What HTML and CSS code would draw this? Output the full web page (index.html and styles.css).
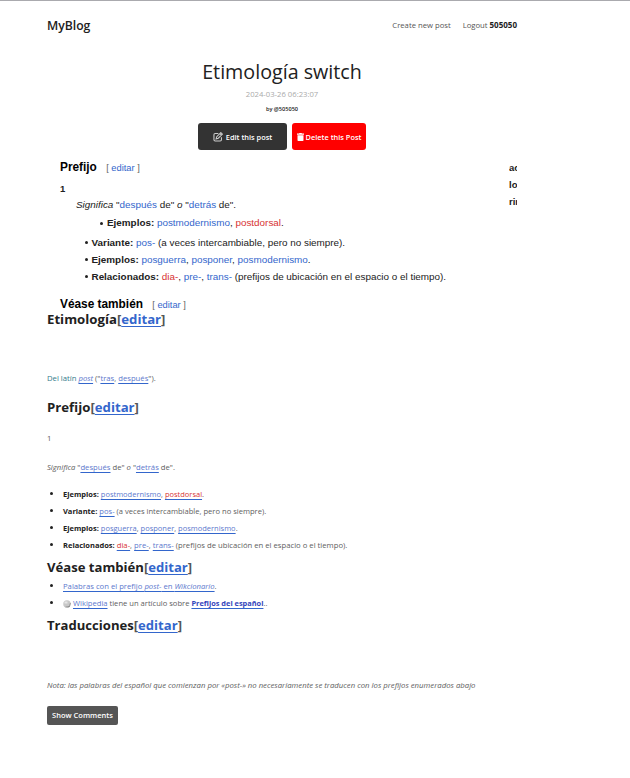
FILE: index.html
```html
<!DOCTYPE html>
<html lang="es">
<head>
<meta charset="utf-8">
<title>MyBlog</title>
<link rel="stylesheet" href="styles.css">
</head>
<body>
<div class="page">
<header class="header"><a class="brand">MyBlog</a><nav class="nav"><a class="create">Create new post</a><a class="logout">Logout <b>505050</b></a></nav></header>
<section class="intro">
<h1>Etimología switch</h1>
<p class="date">2024-03-26 06:23:07</p>
<p class="by">by @505050</p>
<div class="actions">
<a class="btn edit"><svg width="10" height="10" viewBox="0 0 16 16" fill="none" stroke="#ccc" stroke-width="1.7"><path d="M8.5 2.5H3.5Q1.5 2.5 1.5 4.5V12.5Q1.5 14.5 3.5 14.5H11.5Q13.5 14.5 13.5 12.5V8.5M5 11l1-3.500L12.500 1l2.500 2.500L8.500 10zM11 2.500L13.500 5"/></svg><span>Edit this post</span></a>
<a class="btn delete"><svg width="7" height="8" viewBox="0 0 14 16" fill="#fff"><path d="M0 1h4l1-1h4l1 1h4v2.500H0zM1 4.500h12v10q0 1.500-1.500 1.500h-9Q1 16 1 14.500z"/></svg><span>Delete this Post</span></a>
</div>
</section>
<section class="embed">
<div class="wiki">
<h3>Prefijo <small>[ <a>editar</a> ]</small></h3>
<div class="row num"><b>1</b></div>
<div class="row sense"><span><i>Significa</i> "<a>después</a> de" <i>o</i> "<a>detrás</a> de".</span></div>
<div class="row sub"><span class="dot"></span><span><b>Ejemplos:</b> <a>postmodernismo</a>, <a class="red">postdorsal</a>.</span></div>
<div class="row item variant"><span class="dot"></span><span><b>Variante:</b> <a>pos-</a> (a veces intercambiable, pero no siempre).</span></div>
<div class="row item"><span class="dot"></span><span><b>Ejemplos:</b> <a>posguerra</a>, <a>posponer</a>, <a>posmodernismo</a>.</span></div>
<div class="row item"><span class="dot"></span><span><b>Relacionados:</b> <a class="red">dia-</a>, <a>pre-</a>, <a>trans-</a> (prefijos de ubicación en el espacio o el tiempo).</span></div>
<h3 class="also">Véase también <small>[ <a>editar</a> ]</small></h3>
</div>
<aside class="side"><b>ac</b><b>lo</b><b>rin</b></aside>
</section>
<main class="article">
<h2 class="w1">Etimología<span>[<a>editar</a>]</span></h2>
<p class="latin"><span class="teal">Del latín</span> <a><i>post</i></a> ("<a>tras</a>, <a>después</a>").</p>
<h2 class="w2">Prefijo<span>[<a>editar</a>]</span></h2>
<p class="one">1</p>
<p class="meaning"><i>Significa</i> "<a>después</a> de" <i>o</i> "<a>detrás</a> de".</p>
<ul>
<li class="l1"><b>Ejemplos:</b> <a>postmodernismo</a>, <a class="red">postdorsal</a>.</li>
<li class="l2"><b>Variante:</b> <a>pos-</a> (a veces intercambiable, pero no siempre).</li>
<li class="l3"><b>Ejemplos:</b> <a>posguerra</a>, <a>posponer</a>, <a>posmodernismo</a>.</li>
<li class="l4"><b>Relacionados:</b> <a class="red">dia-</a>, <a>pre-</a>, <a>trans-</a> (prefijos de ubicación en el espacio o el tiempo).</li>
</ul>
<h2 class="w3">Véase también<span>[<a>editar</a>]</span></h2>
<ul class="links">
<li class="l5"><a>Palabras con el prefijo <i>post-</i> en <i>Wikcionario</i></a>.</li>
<li class="l6"><svg class="globe" width="8" height="8" viewBox="0 0 16 16"><circle cx="8" cy="8" r="7.500" fill="#c8c8c8"/><path d="M10 15q4-4 5-9M5 14l9-1" fill="none" stroke="#888" stroke-width="1.500"/><path d="M3 3h6v4H3z" fill="#e6e6e6"/></svg> <a>Wikipedia</a> tiene un artículo sobre <a><b>Prefijos del español</b></a>..</li>
</ul>
<h2 class="w4">Traducciones<span>[<a>editar</a>]</span></h2>
<p class="note"><i>Nota: las palabras del español que comienzan por «post-» no necesariamente se traducen con los prefijos enumerados abajo</i></p>
<button class="comments">Show Comments</button>
</main>
</div>
</body>
</html>
```
FILE: styles.css
```css
* { box-sizing: border-box; }
body { margin: 0; background: #fff; color: #212121; font: 7.7px/16px "Open Sans", "Noto Sans", sans-serif; border-top: 1px solid #aaaaae; height: 778px; overflow: hidden; }
h1, h2, h3, p, ul { margin: 0; padding: 0; white-space: nowrap; }
.page { width: 470px; margin-left: 47px; }
.header { height: 50px; display: flex; justify-content: space-between; align-items: center; }
.brand { font-size: 12.2px; font-weight: 600; }
.nav { display: flex; gap: 12px; color: #555; position: relative; top: -1px; }
.nav b { color: #212121; font-size: 8px; }
.intro { display: flex; flex-direction: column; align-items: center; padding-top: 7px; }
h1 { font-size: 19.7px; line-height: 28px; font-weight: 400; }
.date { color: #aaa; }
.by { font-size: 5.600px; font-weight: 600; line-height: 14px; }
.actions { display: flex; gap: 5px; margin-top: 7px; }
.btn { height: 27px; display: flex; align-items: center; justify-content: center; color: #fff; border-radius: 3px; font-size: 7.400px; font-weight: 600; white-space: nowrap; }
.edit { width: 89px; background: #333; gap: 3px; }
.delete { width: 74px; background: #f00; gap: 2px; }
.embed { height: 159px; padding: 7px 0 0 13px; display: flex; justify-content: space-between; font-family: "Liberation Sans", Arial, sans-serif; font-size: 9.880px; white-space: nowrap; }
.wiki { height: 152px; }
.embed a { color: #36c; }
.embed a.red, .article a.red { color: #d73333; }
h3 { font-size: 11.850px; line-height: 20px; color: #000; }
h3 small { font-size: 9.300px; font-weight: 400; color: #666; margin-left: 6px; }
.row { height: 16px; display: flex; align-items: center; }
.num { margin-top: 3px; font-size: 9.500px; }
.sense { padding-left: 16px; }
.sub { padding-left: 40px; margin-top: 2px; }
.item { padding-left: 25px; height: 17px; }
.variant { margin-top: 3px; }
.dot { width: 3px; height: 3px; border-radius: 50%; background: #212121; margin-right: 4px; }
.item .dot { margin-right: 3.500px; }
.also { margin-top: 9px; }
.side { width: 8px; overflow: hidden; display: flex; flex-direction: column; line-height: 17px; padding-top: 2px; font-size: 9.500px; }
.article { color: #606060; }
.article a { color: #36c; text-decoration: underline; text-underline-offset: 1.500px; }
.article p a, .article li a { color: #5c78cd; text-decoration-color: #36c; }
h2 { position: relative; top: -0.500px; font-size: 13.100px; line-height: 20px; font-weight: 700; color: #212121; }
h2 span { color: #555; }
.w1, .w2 { font-size: 13.200px; }
.latin { margin: 41px 0 11px; }
.teal { color: #357b8c; }
.one { margin: 13px 0; }
.meaning { margin-bottom: 11px; }
ul { list-style: none; }
li { height: 17px; line-height: 17px; padding-left: 16px; position: relative; }
li::before { content: ""; position: absolute; left: 3px; top: 6px; width: 3px; height: 3px; border-radius: 50%; background: #212121; }
li > b { color: #212121; font-size: 7.500px; }
.l1, .l3 { font-size: 7.500px; }
.l2 { font-size: 7.580px; }
.l6 { font-size: 7.600px; }
.w3 { margin-top: 3px; }
.links { margin-top: 1px; }
.links b { color: #34b; font-size: 7.400px; }
.globe { vertical-align: -2px; }
.w4 { margin-top: 3px; }
.note { margin: 42px 0 13px; font-size: 7.780px; }
.comments { display: block; width: 71px; height: 19px; padding: 0; border: 0; border-radius: 2px; background: #555; color: #fff; font: 600 7.500px/19px "Open Sans", sans-serif; }
```
